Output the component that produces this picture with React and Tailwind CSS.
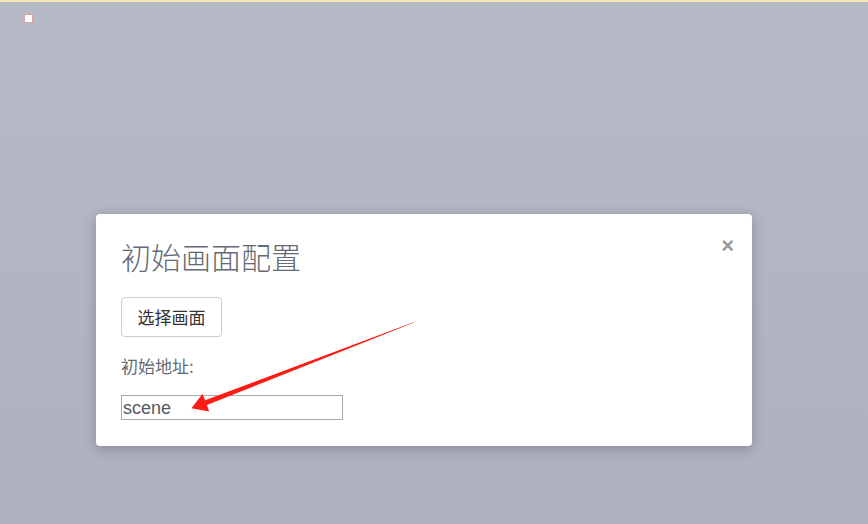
import React from "react";

function Arrow() {
  return (
    <svg className="absolute left-0 top-0 pointer-events-none" width="868" height="524">
      <polygon
        points="414,322.6 206.9,404.9 209.2,411.5 191.5,408.3 202.5,393.8 205.1,400.3 413.4,322.2"
        fill="#fb1d14"
      />
    </svg>
  );
}

export default function App() {
  return (
    <div
      className="relative w-[868px] h-[524px] overflow-hidden bg-gradient-to-b from-[#b6b9c6] to-[#adb0be]"
      style={{ fontFamily: '"Noto Sans CJK SC", "Liberation Sans", sans-serif' }}
    >
      <div className="h-[2px] bg-[#f6e6b6]" />
      <div className="ml-[24px] mt-[12px] w-[9px] h-[9px] bg-white border border-[#d9a5a0]" />

      <div className="ml-[96px] mt-[191px] w-[656px] bg-white rounded-[4px] shadow-[0_3px_12px_rgba(60,64,80,0.35)] relative px-[25px] pt-[22px] pb-[26px]">
        <span
          className="absolute right-[18px] top-[20px] text-[22px] leading-[24px] font-bold text-[#9a9a9a]"
          style={{ fontFamily: '"Liberation Sans", sans-serif' }}
        >
          ×
        </span>
        <div className="text-[30px] leading-[40px] font-light text-[#656b75]">初始画面配置</div>
        <div className="mt-[21px]">
          <button className="h-[40px] w-[101px] border border-[#cccccc] rounded-[4px] bg-white text-[17px] text-[#333333]">
            选择画面
          </button>
        </div>
        <div className="mt-[17px] text-[17px] leading-[24px] text-[#666b73]">初始地址:</div>
        <div
          className="mt-[17px] w-[222px] h-[25px] border border-[#a9a9a9] flex items-center pl-[1px] pt-[1px] text-[18px] text-[#555a60]"
          style={{ fontFamily: '"Liberation Sans", sans-serif' }}
        >
          scene
        </div>
      </div>

      <Arrow />
    </div>
  );
}
